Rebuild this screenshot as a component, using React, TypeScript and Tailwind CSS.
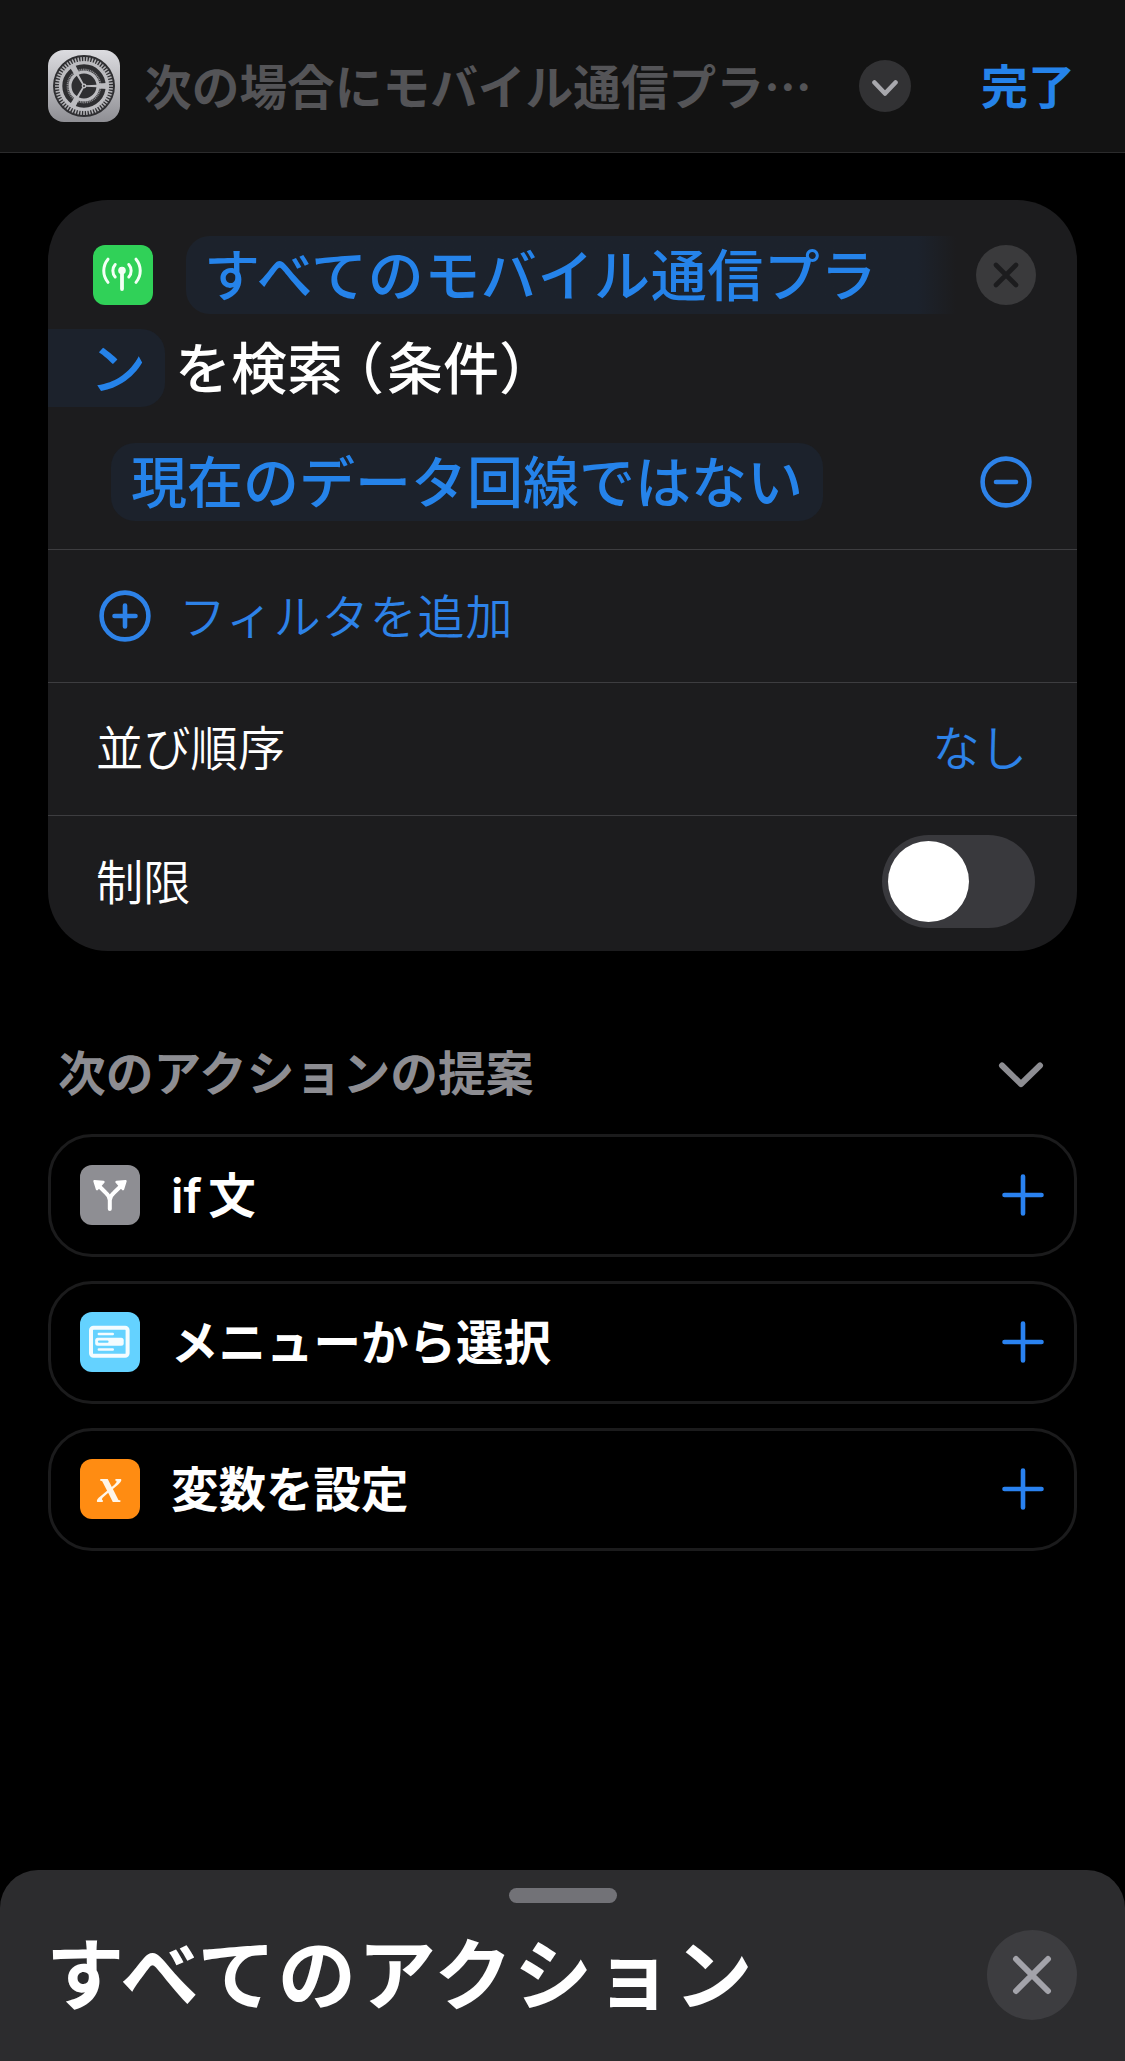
import type { ReactNode } from "react";

const TICKS = Array.from({ length: 60 }, (_, i) => i * 6);

function SettingsIcon() {
  return (
    <svg viewBox="0 0 72 72" className="h-[72px] w-[72px] shrink-0">
      <defs>
        <linearGradient id="settings-bg" x1="0" y1="0" x2="0" y2="1">
          <stop offset="0" stopColor="#dcdce0" />
          <stop offset="1" stopColor="#8f8f94" />
        </linearGradient>
      </defs>
      <rect width="72" height="72" rx="16" fill="url(#settings-bg)" />
      <circle cx="36" cy="36" r="31" fill="#2e2e31" />
      {TICKS.map((deg) => (
        <path
          key={deg}
          d="M36 7V12"
          stroke="#b4b4b8"
          strokeWidth="1.5"
          transform={`rotate(${deg} 36 36)`}
        />
      ))}
      <circle cx="36" cy="36" r="23.4" fill="none" stroke="#bcbcc0" strokeWidth="3.4" />
      <circle cx="36" cy="36" r="16.4" fill="none" stroke="#8a8a8e" strokeWidth="2" strokeDasharray="1.1 .7" />
      <circle cx="36" cy="36" r="14" fill="none" stroke="#bcbcc0" strokeWidth="3" />
      {[90, 210, 330].map((deg) => (
        <path
          key={deg}
          d="M35.2 34 34.800 23 33.500 21.500 33 13h6l-.5 8.500L37.200 23 36.800 34z"
          fill="#bcbcc0"
          transform={`rotate(${deg} 36 36)`}
        />
      ))}
      <circle cx="36" cy="36" r="2.4" fill="#bcbcc0" />
      <circle cx="36" cy="36" r="1" fill="#2e2e31" />
    </svg>
  );
}

function AntennaIcon() {
  return (
    <svg viewBox="0 0 60 60" className="h-[60px] w-[60px] shrink-0 rounded-[12px] bg-[#30d158]">
      <g fill="none" stroke="#f2fff5" strokeWidth="3" strokeLinecap="round">
        <path d="M29 26v18" strokeWidth="3.8" />
        <path d="M22.200 19.500a9.500 9.500 0 0 0 0 12.500M35.800 19.500a9.500 9.500 0 0 1 0 12.500" />
        <path d="M15 14.200a18 18 0 0 0 0 23.200M43 14.200a18 18 0 0 1 0 23.200" />
      </g>
      <circle cx="29" cy="25.500" r="3.8" fill="#f2fff5" />
    </svg>
  );
}

function BranchIcon() {
  return (
    <svg viewBox="0 0 60 60" className="h-[60px] w-[60px] shrink-0 rounded-[12px] bg-[#8e8e93]">
      <g fill="none" stroke="#fff" strokeWidth="4" strokeLinecap="round" strokeLinejoin="round">
        <path d="M29.800 44V35Q29.500 31 25.500 27.500L18.500 20.500M29.800 35Q30.200 31 34.200 27.500L41.500 20.500" />
      </g>
      <path
        d="M14.500 16.200l9 .8-6.500 7.200zM45.500 16.200l-9 .8 6.500 7.200z"
        fill="#fff"
        stroke="#fff"
        strokeWidth="2.4"
        strokeLinejoin="round"
      />
    </svg>
  );
}

function MenuIcon() {
  return (
    <svg viewBox="0 0 60 60" className="h-[60px] w-[60px] shrink-0 rounded-[12px] bg-[#64d2ff]">
      <rect x="11" y="15.800" width="36.600" height="28" rx="2.500" fill="none" stroke="#f4fcff" strokeWidth="4" />
      <rect x="15.200" y="25.700" width="28.500" height="8" rx="2.500" fill="#f4fcff" />
      <path d="M18.800 22h14M18.800 37.500h14" stroke="#f4fcff" strokeWidth="2.4" strokeLinecap="round" />
      <path d="M19 29.700h8.500" stroke="#64d2ff" strokeWidth="2.2" strokeLinecap="round" />
    </svg>
  );
}

function VariableIcon() {
  return (
    <div className="flex h-[60px] w-[60px] shrink-0 items-center justify-center rounded-[12px] bg-[#ff8c12]">
      <span className="-mt-[7px] font-['Liberation_Serif',serif] text-[50px] leading-none font-bold text-[#fff6ea] italic">
        x
      </span>
    </div>
  );
}

interface StrokeIconProps {
  d: string;
  size: string;
  width: number;
  viewBox: string;
  ring?: boolean;
}

function StrokeIcon({ d, size, width, viewBox, ring }: StrokeIconProps) {
  return (
    <svg
      viewBox={viewBox}
      className={size}
      fill="none"
      stroke="currentColor"
      strokeWidth={width}
      strokeLinecap="round"
      strokeLinejoin="round"
    >
      {ring && <circle cx="26" cy="26" r="23.400" />}
      <path d={d} />
    </svg>
  );
}

interface SuggestionProps {
  icon: ReactNode;
  label: string;
}

function Suggestion({ icon, label }: SuggestionProps) {
  return (
    <button className="flex h-[123px] w-full items-center rounded-[44px] border-[3px] border-[#1b1b1c] pr-[29px] pb-[2px] pl-[29px] text-left">
      {icon}
      <span className="ml-[31px] flex-1 pt-[3px] font-['Inter','Noto_Sans_CJK_JP',sans-serif] text-[47.5px] leading-none font-semibold text-white [word-spacing:-5.5px]">
        {label}
      </span>
      <StrokeIcon
        d="M22 3.500v37M3.500 22h37"
        size="h-[44px] w-[44px] text-[#2a82f0]"
        width={4.6}
        viewBox="0 0 44 44"
      />
    </button>
  );
}

const suggestions: SuggestionProps[] = [
  { icon: <BranchIcon />, label: "if 文" },
  { icon: <MenuIcon />, label: "メニューから選択" },
  { icon: <VariableIcon />, label: "変数を設定" },
];

export default function App() {
  return (
    <div
      lang="ja"
      className="flex h-[2061px] w-[1125px] flex-col overflow-hidden bg-black font-['Noto_Sans_CJK_JP',sans-serif] leading-none text-white"
    >
      <header className="flex h-[153px] shrink-0 items-center border-b border-[#2b2b2c] bg-[#131313] pt-[20px] pl-[48px]">
        <SettingsIcon />
        <h1 className="ml-[24px] w-[715px] pb-[3px] text-[47.7px] font-semibold whitespace-nowrap text-[#545457]">
          次の場合にモバイル通信プラ…
        </h1>
        <button className="flex h-[52px] w-[52px] items-center justify-center rounded-full bg-[#323234] text-[#a8a8ad]">
          <StrokeIcon d="M2.500 2.500 13 13.500 23.500 2.500" size="mt-1 h-4 w-[26px]" width={4.6} viewBox="0 0 26 16" />
        </button>
        <button className="ml-[70px] pb-[5px] text-[47px] font-semibold text-[#2583ea]">完了</button>
      </header>

      <section className="mx-[48px] mt-[47px] h-[751px] shrink-0 overflow-hidden rounded-[60px] bg-[#1c1c1e]">
        <div className="flex h-[350px] flex-col border-b border-[#3d3d40] pt-[36px]">
          <div className="flex h-[78px] items-center pl-[45px]">
            <AntennaIcon />
            <span className="ml-[33px] flex h-[78px] w-[770px] items-center rounded-l-[24px] bg-linear-to-r from-[#1c222c] from-95% to-[#1c1c1e] pb-[6px] pl-[18px] text-[56px] font-medium tracking-[0.6px] text-[#2583ea]">
              すべてのモバイル通信プラ
            </span>
            <button className="ml-[20px] flex h-[60px] w-[60px] items-center justify-center rounded-full bg-[#3a3a3c] text-[#1c1c1e]">
              <StrokeIcon d="M3 3l20 20M23 3 3 23" size="h-[26px] w-[26px]" width={4.6} viewBox="0 0 26 26" />
            </button>
          </div>
          <div className="mt-[15px] flex h-[78px] items-center text-[56px] font-medium">
            <span className="flex h-[78px] w-[117px] items-center rounded-r-[24px] bg-[#1c222c] pb-[6px] pl-[42px] text-[#2583ea]">
              ン
            </span>
            <span className="ml-[10px] pb-[6px] whitespace-nowrap">
              を検<span className="tracking-[-15px]">索</span>
              <span className="tracking-[3px]">（</span>条件）
            </span>
          </div>
          <div className="mt-[36px] flex h-[78px] items-center justify-between pr-[45px] pl-[63px]">
            <span className="flex h-[78px] items-center rounded-[24px] bg-[#1c222c] px-[20px] pb-[6px] text-[56px] font-medium text-[#2583ea]">
              現在のデータ回線ではない
            </span>
            <StrokeIcon d="M16 26h20" size="h-[52px] w-[52px] text-[#2d82e8]" width={4.6} viewBox="0 0 52 52" ring />
          </div>
        </div>

        <button className="flex h-[133px] w-full items-center border-b border-[#3d3d40] pl-[51px] text-[#2d82e8]">
          <StrokeIcon
            d="M15.500 26h21M26 15.500v21"
            size="h-[52px] w-[52px]"
            width={4.6}
            viewBox="0 0 52 52"
            ring
          />
          <span className="ml-[28px] pb-[6px] text-[47px] font-[350] tracking-[0.9px]">フィルタを追加</span>
        </button>

        <div className="flex h-[133px] items-center justify-between border-b border-[#3d3d40] pr-[50px] pb-[6px] pl-[48px] text-[47.3px] font-[350]">
          <span>並び順序</span>
          <span className="text-[#2d82e8]">なし</span>
        </div>

        <div className="flex h-[131px] items-center justify-between pr-[42px] pl-[48px] text-[47.3px] font-[350]">
          <span className="pb-[4px]">制限</span>
          <div className="flex h-[93px] w-[153px] items-center rounded-full bg-[#39393d] pl-[6px]">
            <div className="h-[81px] w-[81px] rounded-full bg-white" />
          </div>
        </div>
      </section>

      <section className="mt-[88px] px-[48px]">
        <div className="flex h-[70px] items-center justify-between pr-[33px] pl-[10px] text-[#8d8d92]">
          <h2 className="pb-[6px] text-[47.8px] font-semibold">次のアクションの提案</h2>
          <StrokeIcon d="M4 4.500 23 23 42 4.500" size="mt-[2px] h-[28px] w-[46px]" width={6} viewBox="0 0 46 28" />
        </div>
        <div className="mt-[25px] flex flex-col gap-[24px]">
          {suggestions.map((item) => (
            <Suggestion key={item.label} {...item} />
          ))}
        </div>
      </section>

      <footer className="mt-auto flex h-[191px] shrink-0 flex-col rounded-t-[38px] bg-[#2c2c2e]">
        <div className="mx-auto mt-[18px] h-[15px] w-[108px] shrink-0 rounded-full bg-[#727277]" />
        <div className="mt-[27px] flex h-[90px] items-center justify-between pr-[48px] pl-[46px]">
          <h2 className="pb-[10px] text-[78.3px] font-bold tracking-[1.8px] whitespace-nowrap">すべてのアクション</h2>
          <button className="flex h-[90px] w-[90px] items-center justify-center rounded-full bg-[#3d3d40] text-[#a3a3aa]">
            <StrokeIcon d="M4 4l32 32M36 4 4 36" size="h-[40px] w-[40px]" width={6} viewBox="0 0 40 40" />
          </button>
        </div>
      </footer>
    </div>
  );
}
